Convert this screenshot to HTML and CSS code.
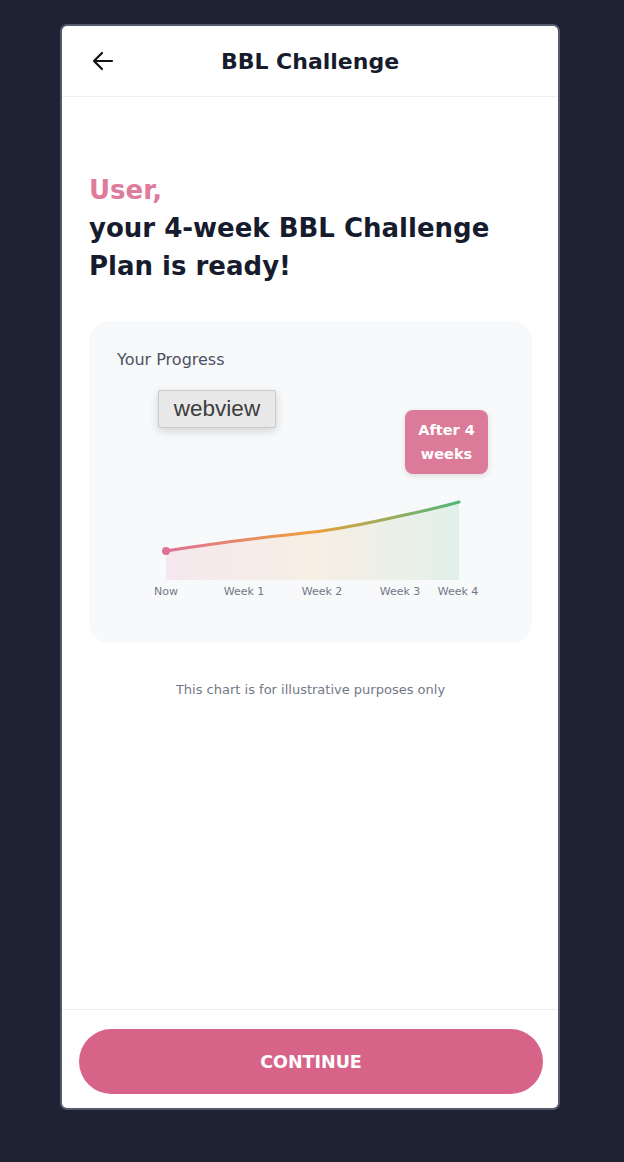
FILE: index.html
```html
<!DOCTYPE html>
<html lang="en">
<head>
<meta charset="utf-8">
<title>BBL Challenge</title>
<link rel="stylesheet" href="styles.css">
</head>
<body>
<div class="phone">
  <header class="topbar">
    <button class="back" aria-label="Back">
      <svg width="22" height="20" viewBox="0 0 22 20"><path d="M20 10H2M10 2L2 10l8 8" fill="none" stroke="#111" stroke-width="2.2" stroke-linecap="round" stroke-linejoin="round"/></svg>
    </button>
    <h1 class="title">BBL Challenge</h1>
  </header>
  <main class="content">
    <h2 class="headline"><span class="user">User,</span><br>your 4-week BBL Challenge Plan is ready!</h2>
    <section class="card">
      <div class="card-label">Your Progress</div>
      <div class="chart">
        <svg class="chart-svg" width="446" height="230" viewBox="0 0 446 230">
          <defs>
            <linearGradient id="lg" x1="77" y1="0" x2="370" y2="0" gradientUnits="userSpaceOnUse">
              <stop offset="0" stop-color="#de7196"/>
              <stop offset="0.5" stop-color="#eda03c"/>
              <stop offset="1" stop-color="#4fb778"/>
            </linearGradient>
            <linearGradient id="fg" x1="77" y1="0" x2="370" y2="0" gradientUnits="userSpaceOnUse">
              <stop offset="0" stop-color="#de7196" stop-opacity="0.13"/>
              <stop offset="0.5" stop-color="#eda03c" stop-opacity="0.12"/>
              <stop offset="1" stop-color="#4fb778" stop-opacity="0.13"/>
            </linearGradient>
          </defs>
          <path d="M77 181 C110 176 130 173 155 170 C185 166 210 164 233 161 C260 157 285 152 311 146 C335 141 352 137 370 132 L370 210 L77 210 Z" fill="url(#fg)"/>
          <path d="M77 181 C110 176 130 173 155 170 C185 166 210 164 233 161 C260 157 285 152 311 146 C335 141 352 137 370 132" fill="none" stroke="url(#lg)" stroke-width="3" stroke-linecap="round"/>
          <circle cx="77" cy="181" r="4" fill="#de7196"/>
          <g class="axis">
            <text x="77" y="225" text-anchor="middle">Now</text>
            <text x="155" y="225" text-anchor="middle">Week 1</text>
            <text x="233" y="225" text-anchor="middle">Week 2</text>
            <text x="311" y="225" text-anchor="middle">Week 3</text>
            <text x="369" y="225" text-anchor="middle">Week 4</text>
          </g>
        </svg>
        <div class="webview">webview</div>
        <div class="after">After 4<br>weeks</div>
      </div>
    </section>
    <p class="caption">This chart is for illustrative purposes only</p>
  </main>
  <footer class="footer">
    <button class="cta">CONTINUE</button>
  </footer>
</div>
</body>
</html>
```

FILE: styles.css
```css
* { box-sizing: border-box; }
html, body { margin: 0; padding: 0; }
body {
  background: #1e2233;
  font-family: "DejaVu Sans", "Open Sans", sans-serif;
  padding-top: 24px;
  min-height: 1162px;
}
.phone {
  width: 500px;
  height: 1086px;
  margin-left: 60px;
  background: #fff;
  border: 2px solid #545a6c;
  border-radius: 7px;
  display: flex;
  flex-direction: column;
  overflow: hidden;
}
.topbar {
  height: 71px;
  flex: none;
  display: flex;
  align-items: center;
  justify-content: center;
  position: relative;
  border-bottom: 1px solid #eef0f3;
}
.back {
  position: absolute;
  left: 30px;
  top: 25px;
  background: none;
  border: 0;
  padding: 0;
  width: 22px;
  height: 20px;
}
.back svg { display: block; }
.title {
  margin: 0;
  font-size: 22px;
  font-weight: 700;
  color: #161c2d;
}
.content {
  flex: 1;
  padding: 74px 26px 0 27px;
}
.headline {
  margin: 0;
  font-size: 26px;
  line-height: 38px;
  font-weight: 700;
  color: #161c2d;
  padding-right: 20px;
}
.user { color: #df7b9b; }
.card {
  margin-top: 36px;
  background: #f8f9fb;
  border-radius: 20px;
  padding: 29px 0 43px;
}
.card-label {
  padding-left: 28px;
  font-size: 16px;
  line-height: 20px;
  color: #4b5160;
}
.chart {
  position: relative;
  height: 230px;
}
.chart-svg { display: block; }
.axis text {
  font-family: "DejaVu Sans", sans-serif;
  font-size: 11px;
  fill: #737886;
}
.webview {
  position: absolute;
  left: 69px;
  top: 20px;
  width: 118px;
  height: 38px;
  background: #e8e8e8;
  border: 1px solid #c9c9c9;
  border-radius: 2px;
  box-shadow: 0 3px 10px rgba(0,0,0,0.16);
  font-family: "Liberation Sans", sans-serif;
  font-size: 22.5px;
  color: #3d3d3d;
  display: flex;
  align-items: center;
  justify-content: center;
}
.after {
  position: absolute;
  left: 316px;
  top: 40px;
  width: 83px;
  height: 64px;
  background: #dc7a9a;
  border-radius: 8px;
  box-shadow: 0 2px 6px rgba(0,0,0,0.12);
  color: #fff;
  font-size: 14.5px;
  font-weight: 700;
  line-height: 24px;
  display: flex;
  align-items: center;
  justify-content: center;
  text-align: center;
}
.caption {
  margin: 38px 0 0;
  text-align: center;
  font-size: 13px;
  line-height: 18px;
  color: #737886;
}
.footer {
  flex: none;
  border-top: 1px solid #eceef2;
  padding: 19px 15px 14px 17px;
}
.cta {
  display: block;
  width: 100%;
  height: 65px;
  border: 0;
  border-radius: 33px;
  background: #d76488;
  color: #fff;
  font-family: "DejaVu Sans", sans-serif;
  font-size: 17.5px;
  font-weight: 700;
}
```
